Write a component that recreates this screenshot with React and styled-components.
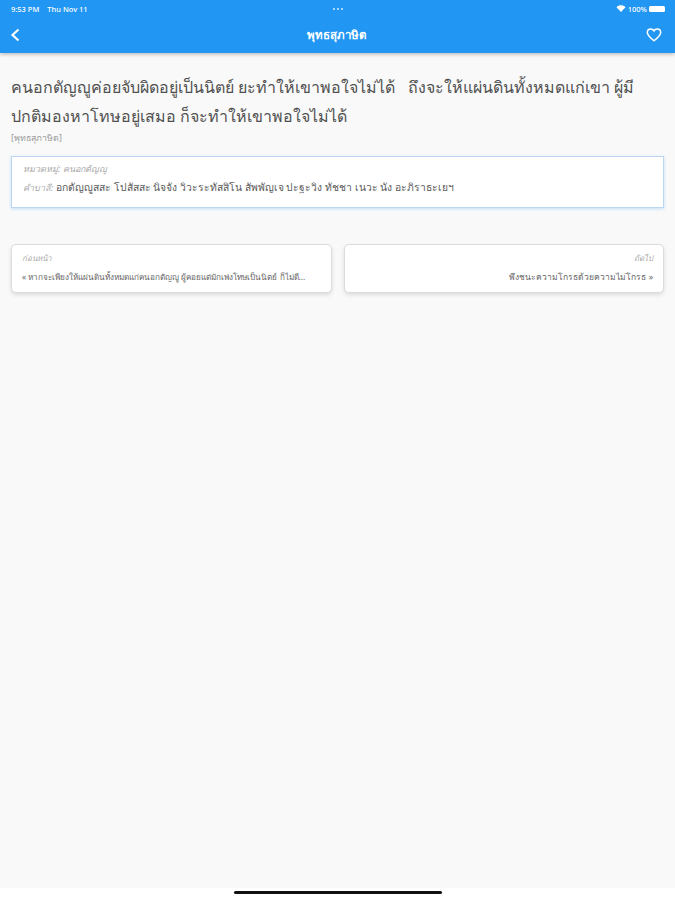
import React from "react";
import styled, { createGlobalStyle } from "styled-components";

const Global = createGlobalStyle`
  html, body {
    margin: 0;
    padding: 0;
    background: #fff;
  }
  body {
    font-family: "Noto Sans", "Open Sans", "DejaVu Sans", sans-serif;
  }
`;

const Page = styled.div`
  width: 675px;
  height: 900px;
  display: flex;
  flex-direction: column;
  overflow: hidden;
`;
const Header = styled.header`
  background-color: #2196f3;
  color: #fff;
  height: 53px;
  flex: none;
  box-shadow: 0 1px 4px rgba(0, 0, 0, 0.3);
  position: relative;
  z-index: 1;
`;
const StatusBar = styled.div`
  height: 17px;
  padding: 0 10px 0 11px;
  display: flex;
  align-items: center;
  justify-content: space-between;
  font-size: 7.5px;
  font-weight: 500;
`;
const StatusGroup = styled.div`
  display: flex;
  align-items: center;
  gap: ${({ gap }) => gap || 2}px;
  width: 120px;
  justify-content: ${({ end }) => (end ? "flex-end" : "flex-start")};
`;
const Dots = styled.div`
  display: flex;
  gap: 2px;
`;
const Dot = styled.span`
  width: 2px;
  height: 2px;
  border-radius: 50%;
  background: rgba(255, 255, 255, 0.8);
`;
const Battery = styled.span`
  width: 16px;
  height: 6px;
  border-radius: 1.5px;
  background: #fff;
`;
const NavBar = styled.div`
  height: 36px;
  padding: 0 13px 0 10px;
  display: flex;
  align-items: center;
  justify-content: space-between;
`;
const NavTitle = styled.div`
  font-size: 11.5px;
  font-weight: 700;
`;
const Body = styled.main`
  flex: 1;
  background-color: #f9f9f9;
  padding: 20px 11px 0 11px;
`;
const Quote = styled.h1`
  margin: 0;
  font-size: 16px;
  font-weight: 400;
  line-height: 28.5px;
  color: #505050;
`;
const Source = styled.div`
  font-size: 8.8px;
  color: #9a9a9a;
  line-height: 12px;
  margin-top: 2px;
`;
const InfoBox = styled.section`
  margin-top: 12px;
  height: 52px;
  box-sizing: border-box;
  background: #fff;
  border: 1px solid #bcd5f2;
  box-shadow: 0 1px 3px rgba(33, 150, 243, 0.25);
  padding: 2px 11px;
  font-size: 10.3px;
  line-height: 18px;
  color: #5a5a5a;
`;
const Muted = styled.span`
  color: #aaa;
  font-size: 9px;
  font-style: italic;
`;
const InfoLine = styled.div`
  white-space: nowrap;
`;
const Pager = styled.nav`
  margin-top: 36px;
  display: grid;
  grid-template-columns: minmax(0, 1fr) minmax(0, 1fr);
  gap: 12px;
`;
const PagerCard = styled.div`
  height: 49px;
  box-sizing: border-box;
  background: #fff;
  border: 1px solid #dcdcdc;
  border-radius: 5px;
  box-shadow: 0 2px 4px rgba(0, 0, 0, 0.12);
  padding: 6px 10px;
  text-align: ${({ right }) => (right ? "right" : "left")};
`;
const PagerLabel = styled.div`
  font-size: 8px;
  font-style: italic;
  color: #aaa;
  line-height: 14px;
`;
const PagerText = styled.div`
  font-size: ${({ small }) => (small ? 8.2 : 8.5)}px;
  color: #666;
  line-height: 16px;
  margin-top: 4px;
  white-space: nowrap;
`;
const HomeArea = styled.div`
  height: 12px;
  flex: none;
  background: #fff;
  display: flex;
  justify-content: center;
  padding-top: 3px;
  box-sizing: border-box;
`;
const HomeBar = styled.div`
  width: 208px;
  height: 3px;
  border-radius: 2px;
  background: #111;
`;

const App = () => (
  <Page>
    <Global />
    <Header>
      <StatusBar>
        <StatusGroup gap={8}>
          <span>9:53 PM</span>
          <span>Thu Nov 11</span>
        </StatusGroup>
        <Dots>
          <Dot />
          <Dot />
          <Dot />
        </Dots>
        <StatusGroup end>
          <svg width="10" height="7" viewBox="0 0 9 7">
            <path d="M0 2.2 C2.5 -0.4 6.5 -0.4 9 2.2 L4.5 7 Z" fill="#fff" />
          </svg>
          <span>100%</span>
          <Battery />
        </StatusGroup>
      </StatusBar>
      <NavBar>
        <svg width="16" height="14" viewBox="0 0 16 14" fill="none">
          <path d="M8.5 1.5 L2.5 7 L8.5 12.5" stroke="#fff" strokeWidth="2.2" />
        </svg>
        <NavTitle>พุทธสุภาษิต</NavTitle>
        <svg width="16" height="14" viewBox="0 0 24 22" fill="none">
          <path
            d="M12 20 C5 14.5 1.5 11 1.5 7 C1.5 3.8 4 1.5 7 1.5 C9 1.5 11 2.6 12 4.5 C13 2.6 15 1.5 17 1.5 C20 1.5 22.5 3.8 22.5 7 C22.5 11 19 14.5 12 20 Z"
            stroke="#fff"
            strokeWidth="2.4"
          />
        </svg>
      </NavBar>
    </Header>
    <Body>
      <Quote>
        คนอกตัญญูค่อยจับผิดอยู่เป็นนิตย์ ยะทำให้เขาพอใจไม่ได้ &nbsp; ถึงจะให้แผ่นดินทั้งหมดแก่เขา ผู้มี
        <br />
        ปกติมองหาโทษอยู่เสมอ ก็จะทำให้เขาพอใจไม่ได้
      </Quote>
      <Source>[พุทธสุภาษิต]</Source>
      <InfoBox>
        <InfoLine>
          <Muted>หมวดหมู่: คนอกตัญญู</Muted>
        </InfoLine>
        <InfoLine>
          <Muted>คำบาลี:</Muted> อกตัญญูสสะ โปสัสสะ นิจจัง วิวะระทัสสิโน สัพพัญเจ ปะฐะวิง ทัชชา เนวะ นัง อะภิราธะเยฯ
        </InfoLine>
      </InfoBox>
      <Pager>
        <PagerCard>
          <PagerLabel>ก่อนหน้า</PagerLabel>
          <PagerText small>« หากจะเพียงให้แผ่นดินทั้งหมดแก่คนอกตัญญู ผู้คอยแต่มักเพ่งโทษเป็นนิตย์ ก็ไม่ดี...</PagerText>
        </PagerCard>
        <PagerCard right>
          <PagerLabel>ถัดไป</PagerLabel>
          <PagerText>พึงชนะความโกรธด้วยความไม่โกรธ »</PagerText>
        </PagerCard>
      </Pager>
    </Body>
    <HomeArea>
      <HomeBar />
    </HomeArea>
  </Page>
);

export default App;
